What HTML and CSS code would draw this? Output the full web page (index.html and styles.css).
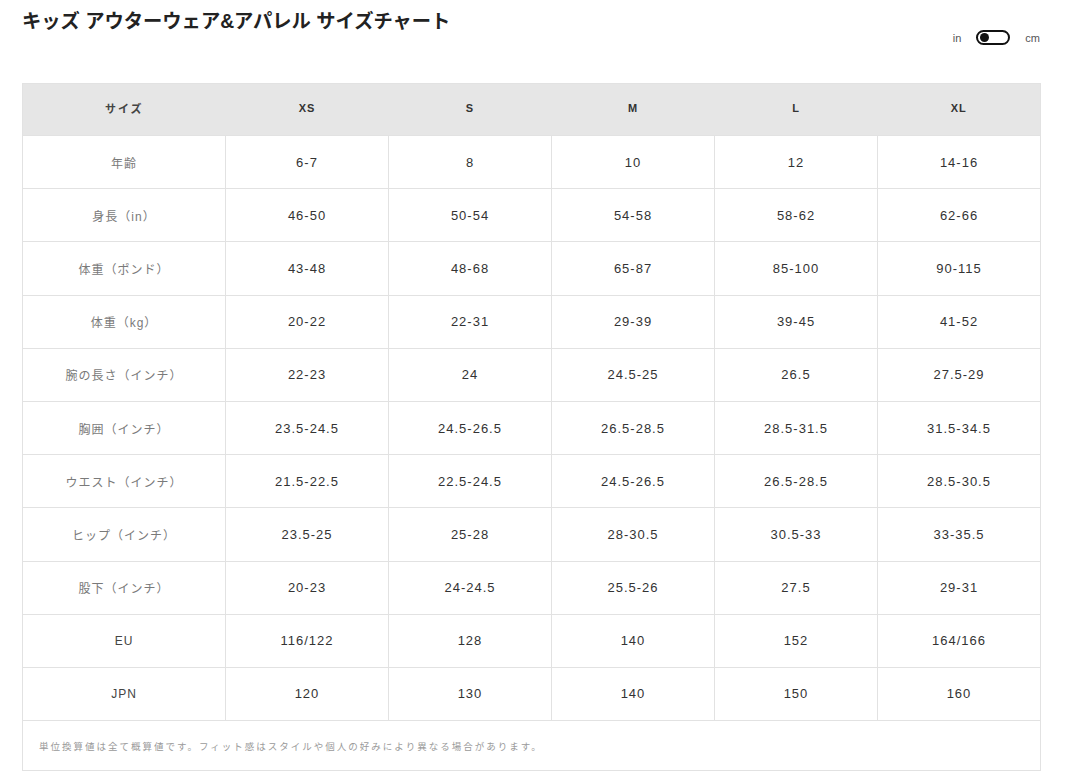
FILE: index.html
```html
<!DOCTYPE html>
<html lang="ja">
<head>
<meta charset="utf-8">
<link rel="stylesheet" href="styles.css">
</head>
<body>
<div class="page">
  <div class="top">
    <h1 class="title">キッズ アウターウェア&amp;アパレル サイズチャート</h1>
    <div class="units">
      <span class="unit">in</span>
      <span class="switch"><span class="knob"></span></span>
      <span class="unit">cm</span>
    </div>
  </div>
  <table class="chart">
    <colgroup>
      <col class="c-label"><col class="c-size"><col class="c-size"><col class="c-size"><col class="c-size"><col class="c-size">
    </colgroup>
    <thead>
      <tr><th class="hl">サイズ</th><th>XS</th><th>S</th><th>M</th><th>L</th><th>XL</th></tr>
    </thead>
    <tbody>
      <tr><td class="lbl">年齢</td><td>6-7</td><td>8</td><td>10</td><td>12</td><td>14-16</td></tr>
      <tr><td class="lbl">身長（in）</td><td>46-50</td><td>50-54</td><td>54-58</td><td>58-62</td><td>62-66</td></tr>
      <tr><td class="lbl">体重（ポンド）</td><td>43-48</td><td>48-68</td><td>65-87</td><td>85-100</td><td>90-115</td></tr>
      <tr><td class="lbl">体重（kg）</td><td>20-22</td><td>22-31</td><td>29-39</td><td>39-45</td><td>41-52</td></tr>
      <tr><td class="lbl">腕の長さ（インチ）</td><td>22-23</td><td>24</td><td>24.5-25</td><td>26.5</td><td>27.5-29</td></tr>
      <tr><td class="lbl">胸囲（インチ）</td><td>23.5-24.5</td><td>24.5-26.5</td><td>26.5-28.5</td><td>28.5-31.5</td><td>31.5-34.5</td></tr>
      <tr><td class="lbl">ウエスト（インチ）</td><td>21.5-22.5</td><td>22.5-24.5</td><td>24.5-26.5</td><td>26.5-28.5</td><td>28.5-30.5</td></tr>
      <tr><td class="lbl">ヒップ（インチ）</td><td>23.5-25</td><td>25-28</td><td>28-30.5</td><td>30.5-33</td><td>33-35.5</td></tr>
      <tr><td class="lbl">股下（インチ）</td><td>20-23</td><td>24-24.5</td><td>25.5-26</td><td>27.5</td><td>29-31</td></tr>
      <tr><td class="lbl code">EU</td><td>116/122</td><td>128</td><td>140</td><td>152</td><td>164/166</td></tr>
      <tr><td class="lbl code">JPN</td><td>120</td><td>130</td><td>140</td><td>150</td><td>160</td></tr>
      <tr class="note-row"><td colspan="6" class="note">単位換算値は全て概算値です。フィット感はスタイルや個人の好みにより異なる場合があります。</td></tr>
    </tbody>
  </table>
</div>
</body>
</html>
```

FILE: styles.css
```css
html, body {
  margin: 0;
  padding: 0;
  background: #ffffff;
}
body {
  font-family: "Liberation Sans", "Noto Sans CJK JP", sans-serif;
  color: #333;
}
.page {
  width: 1018px;
  margin-left: 22px;
}
.top {
  display: flex;
  justify-content: space-between;
  align-items: flex-start;
  height: 83px;
}
.title {
  margin: 10px 0 0 0;
  font-size: 19.3px;
  line-height: 24px;
  font-weight: 700;
  color: #222;
  letter-spacing: 0;
}
.units {
  display: flex;
  align-items: center;
  gap: 15px;
  margin-top: 30px;
  font-size: 11px;
  color: #555;
}
.switch {
  position: relative;
  width: 30px;
  height: 11px;
  border: 2px solid #111;
  border-radius: 9px;
  box-sizing: content-box;
}
.knob {
  position: absolute;
  left: 2px;
  top: 1px;
  width: 9px;
  height: 9px;
  border-radius: 50%;
  background: #111;
}
.chart {
  width: 1018px;
  border-collapse: collapse;
  table-layout: fixed;
  border: 1px solid #e2e2e2;
}
.c-label { width: 203px; }
.c-size { width: 163px; }
.chart th {
  background: #e6e6e6;
  height: 52px;
  padding: 0 0 3px 0;
  box-sizing: border-box;
  font-size: 11px;
  letter-spacing: 1px;
  font-weight: 700;
  color: #333;
  text-align: center;
  border: none;
}
.chart th.hl {
  letter-spacing: 2px;
  color: #444;
}
.chart td {
  height: 52.2px;
  padding: 0;
  text-align: center;
  font-size: 13px;
  letter-spacing: 1px;
  color: #333;
  border: 1px solid #e2e2e2;
}
.chart td.lbl {
  font-size: 12px;
  letter-spacing: 1px;
  color: #7a7a7a;
}
.chart td.code {
  color: #444;
}
.chart tr.note-row td {
  height: 49px;
}
.chart td.note {
  text-align: left;
  padding-left: 16px;
  font-size: 9.5px;
  letter-spacing: 2px;
  color: #9a9a9a;
}
```
